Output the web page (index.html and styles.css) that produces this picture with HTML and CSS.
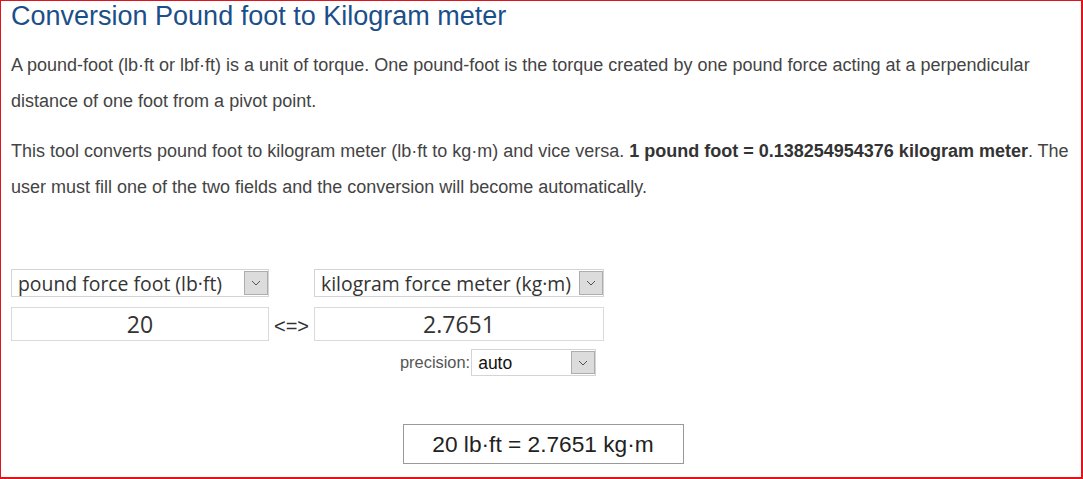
FILE: index.html
```html
<!DOCTYPE html>
<html lang="en">
<head>
    <meta charset="UTF-8">
    <meta name="viewport" content="width=device-width, initial-scale=1.0">
    <title>Conversion Pound foot to Kilogram meter</title>
    <link rel="stylesheet" href="styles.css">
</head>
<body>
    <div class="page">
        <h1>Conversion Pound foot to Kilogram meter</h1>
        <p>A pound-foot (lb·ft or lbf·ft) is a unit of torque. One pound-foot is the torque created by one pound force acting at a perpendicular distance of one foot from a pivot point.</p>
        <p>This tool converts pound foot to kilogram meter (lb·ft to kg·m) and vice versa. <b>1 pound foot = 0.138254954376 kilogram meter</b>. The user must fill one of the two fields and the conversion will become automatically.</p>

        <div class="converter">
            <div class="unit-select">
                <select id="from-unit">
                    <option>pound force foot (lb·ft)</option>
                </select>
                <span class="arrow"><svg width="10" height="6" viewBox="0 0 10 6"><path d="M1 1 L5 5 L9 1" fill="none" stroke="#555" stroke-width="1"/></svg></span>
            </div>
            <span></span>
            <div class="unit-select">
                <select id="to-unit">
                    <option>kilogram force meter (kg·m)</option>
                </select>
                <span class="arrow"><svg width="10" height="6" viewBox="0 0 10 6"><path d="M1 1 L5 5 L9 1" fill="none" stroke="#555" stroke-width="1"/></svg></span>
            </div>

            <input type="text" id="from-value" class="value" value="20">
            <span class="swap">&lt;=&gt;</span>
            <input type="text" id="to-value" class="value" value="2.7651">

            <span></span>
            <span></span>
            <div class="precision">
                <label for="precision">precision:</label>
                <div class="unit-select small">
                    <select id="precision">
                        <option>auto</option>
                    </select>
                    <span class="arrow"><svg width="10" height="6" viewBox="0 0 10 6"><path d="M1 1 L5 5 L9 1" fill="none" stroke="#555" stroke-width="1"/></svg></span>
                </div>
            </div>
        </div>

        <div class="result">20 lb·ft = 2.7651 kg·m</div>
    </div>
</body>
</html>
```

FILE: styles.css
```css
html, body {
    margin: 0;
    padding: 0;
    background: white;
}

body {
    font-family: "Liberation Sans", Arial, sans-serif;
    color: #444;
}

.page {
    box-sizing: border-box;
    height: 479px;
    border: 1px solid #e0141e;
    border-right-width: 2px;
    border-bottom-width: 2px;
    padding: 0 10px;
}

h1 {
    margin: 0 0 16px 0;
    font-size: 27px;
    font-weight: normal;
    line-height: 30px;
    color: #1b4f8a;
}

p {
    margin: 0 0 14px 0;
    font-size: 18px;
    line-height: 36px;
}

b {
    color: #333;
}

.converter {
    display: grid;
    grid-template-columns: 258px 45px 290px;
    row-gap: 10px;
    margin-top: 64px;
}

.unit-select {
    display: flex;
    height: 28px;
    box-sizing: border-box;
    border: 1px solid #d4d4d4;
    background: white;
}

.unit-select select {
    flex: 1;
    min-width: 0;
    appearance: none;
    border: none;
    outline: none;
    background: transparent;
    padding: 0 6px;
    font-family: "Open Sans", sans-serif;
    font-size: 19.4px;
    color: #333;
}

.unit-select .arrow {
    width: 24px;
    margin: 1px 0 1px 0;
    display: flex;
    align-items: center;
    justify-content: center;
    background: #dcdcdc;
    border: 1px solid #adadad;
    box-sizing: border-box;
}

.value {
    box-sizing: border-box;
    height: 34px;
    border: 1px solid #dadada;
    text-align: center;
    font-family: "Open Sans", sans-serif;
    font-size: 23px;
    color: #333;
    outline: none;
    padding: 0;
}

.swap {
    display: flex;
    align-items: center;
    justify-content: center;
    font-size: 20px;
    color: #333;
    padding-top: 4px;
}

.precision {
    display: flex;
    align-items: center;
    padding-left: 86px;
    gap: 1px;
    margin-top: -2px;
}

.precision label {
    font-size: 16.4px;
    color: #555;
}

.unit-select.small {
    width: 125px;
    height: 27px;
}

.unit-select.small select {
    font-family: "Liberation Sans", Arial, sans-serif;
    font-size: 17.5px;
    color: #111;
    padding: 0 6px;
}

.result {
    width: 281px;
    box-sizing: border-box;
    margin: 48px auto 0 auto;
    padding: 0;
    height: 40px;
    line-height: 38px;
    border: 1px solid #999;
    text-align: center;
    font-size: 22.7px;
    color: #222;
    position: relative;
    left: 2px;
}
```
